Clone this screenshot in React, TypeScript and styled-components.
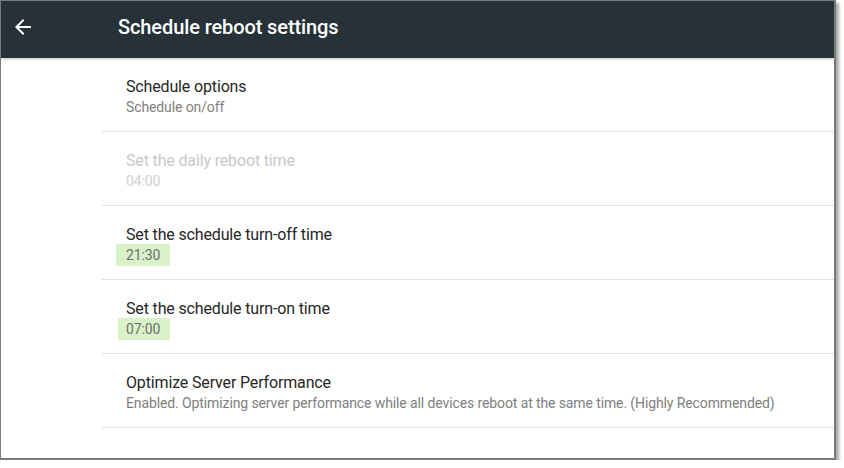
import React, { FC } from 'react';
import styled, { createGlobalStyle } from 'styled-components';

const GlobalStyle = createGlobalStyle`
  html, body {
    margin: 0;
    padding: 0;
    background: #fff;
  }
  body {
    font-family: Roboto, "Noto Sans", sans-serif;
  }
`;

type Setting = {
  title: string;
  value: string;
  disabled?: boolean;
  highlight?: number;
};

const settings: Setting[] = [
  { title: 'Schedule options', value: 'Schedule on/off' },
  { title: 'Set the daily reboot time', value: '04:00', disabled: true },
  { title: 'Set the schedule turn-off time', value: '21:30', highlight: 10 },
  { title: 'Set the schedule turn-on time', value: '07:00', highlight: 8 },
  {
    title: 'Optimize Server Performance',
    value:
      'Enabled. Optimizing server performance while all devices reboot at the same time. (Highly Recommended)',
  },
];

const BackArrow: FC = () => (
  <svg width="24" height="24" viewBox="0 0 24 24" fill="#fff">
    <path d="M20 11H7.83l5.59-5.59L12 4l-8 8 8 8 1.41-1.41L7.83 13H20v-2z" />
  </svg>
);

const App = () => {
  return (
    <>
      <GlobalStyle />
      <Window>
        <Toolbar>
          <BackButton>
            <BackArrow />
          </BackButton>
          <Title>Schedule reboot settings</Title>
        </Toolbar>
        <List>
          {settings.map((s) => (
            <Row key={s.title}>
              <RowTitle $disabled={s.disabled}>{s.title}</RowTitle>
              <RowValue $disabled={s.disabled}>
                {s.highlight !== undefined ? (
                  <Marked $shift={s.highlight}>{s.value}</Marked>
                ) : (
                  s.value
                )}
              </RowValue>
            </Row>
          ))}
        </List>
      </Window>
    </>
  );
};

export default App;

const Window = styled.div`
  width: 833px;
  height: 457px;
  border: 1px solid #7a7a7a;
  border-right-width: 2px;
  border-bottom-width: 2px;
  box-shadow: 3px 3px 3px rgba(0, 0, 0, 0.35);
  background: #fff;
  overflow: hidden;
  display: flex;
  flex-direction: column;
`;
const Toolbar = styled.div`
  height: 57px;
  flex-shrink: 0;
  background: #263238;
  display: flex;
  align-items: center;
  padding-left: 10px;
  box-shadow: 0 1px 3px rgba(0, 0, 0, 0.25);
  position: relative;
  z-index: 1;
`;
const BackButton = styled.div`
  width: 24px;
  height: 24px;
  display: flex;
  margin-top: -6px;
`;
const Title = styled.div`
  margin-left: 83px;
  margin-top: -5px;
  color: #fff;
  font-size: 20px;
  font-weight: 500;
  letter-spacing: -0.1px;
`;
const List = styled.div`
  padding-left: 101px;
`;
const Row = styled.div`
  height: 74px;
  border-bottom: 1px solid #e2e2e2;
  padding: 6px 0 0 24px;
  box-sizing: border-box;
  display: flex;
  flex-direction: column;
  justify-content: center;
`;
const RowTitle = styled.div<{ $disabled?: boolean }>`
  font-size: 16px;
  line-height: 20px;
  letter-spacing: -0.15px;
  color: ${(p) => (p.$disabled ? '#c8c8c8' : '#262626')};
`;
const RowValue = styled.div<{ $disabled?: boolean }>`
  font-size: 14px;
  line-height: 21px;
  letter-spacing: -0.11px;
  color: ${(p) => (p.$disabled ? '#cfcfcf' : '#808080')};
`;
const Marked = styled.span<{ $shift: number }>`
  background: #d9f2c9;
  color: #6e6e6e;
  padding: 3px 10px 3px ${(p) => p.$shift}px;
  margin-left: -${(p) => p.$shift}px;
`;
